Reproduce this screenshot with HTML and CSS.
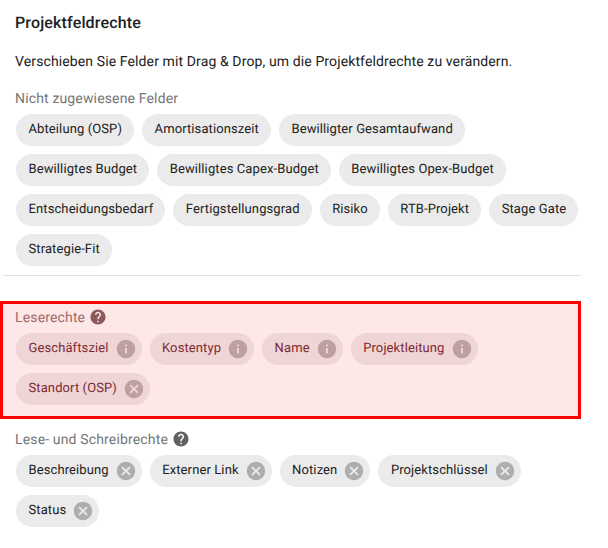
FILE: index.html
```html
<!DOCTYPE html>
<html lang="de">
<head>
    <meta charset="UTF-8">
    <meta name="viewport" content="width=device-width, initial-scale=1.0">
    <title>Projektfeldrechte</title>
    <link rel="stylesheet" href="styles.css">
</head>
<body>
    <svg class="icon-defs" aria-hidden="true">
        <symbol id="icon-cancel" viewBox="0 0 24 24"><path d="M12 2C6.47 2 2 6.47 2 12s4.47 10 10 10 10-4.47 10-10S17.53 2 12 2zm5 13.59L15.59 17 12 13.41 8.41 17 7 15.59 10.59 12 7 8.41 8.41 7 12 10.59 15.59 7 17 8.41 13.41 12 17 15.59z"/></symbol>
        <symbol id="icon-info" viewBox="0 0 24 24"><path d="M12 2C6.48 2 2 6.48 2 12s4.48 10 10 10 10-4.48 10-10S17.52 2 12 2zm1 15h-2v-6h2v6zm0-8h-2V7h2v2z"/></symbol>
        <symbol id="icon-help" viewBox="0 0 24 24"><path d="M12 2C6.48 2 2 6.48 2 12s4.48 10 10 10 10-4.48 10-10S17.52 2 12 2zm1 17h-2v-2h2v2zm2.07-7.75l-.9.92C13.45 12.9 13 13.5 13 15h-2v-.5c0-1.1.45-2.1 1.17-2.83l1.24-1.26c.37-.36.59-.86.59-1.41 0-1.1-.9-2-2-2s-2 .9-2 2H8c0-2.21 1.79-4 4-4s4 1.79 4 4c0 .88-.36 1.68-.93 2.25z"/></symbol>
    </svg>

    <div class="panel">
        <h1 class="title">Projektfeldrechte</h1>
        <p class="intro">Verschieben Sie Felder mit Drag &amp; Drop, um die Projektfeldrechte zu verändern.</p>

        <!-- Unassigned fields -->
        <div class="section section-unassigned">
            <div class="section-label"><span class="section-name">Nicht zugewiesene Felder</span></div>
            <div class="chips">
                <div class="chip"><span class="chip-label">Abteilung (OSP)</span></div>
                <div class="chip"><span class="chip-label">Amortisationszeit</span></div>
                <div class="chip"><span class="chip-label">Bewilligter Gesamtaufwand</span></div>
                <div class="chip"><span class="chip-label">Bewilligtes Budget</span></div>
                <div class="chip"><span class="chip-label">Bewilligtes Capex-Budget</span></div>
                <div class="chip"><span class="chip-label">Bewilligtes Opex-Budget</span></div>
                <div class="chip"><span class="chip-label">Entscheidungsbedarf</span></div>
                <div class="chip"><span class="chip-label">Fertigstellungsgrad</span></div>
                <div class="chip"><span class="chip-label">Risiko</span></div>
                <div class="chip"><span class="chip-label">RTB-Projekt</span></div>
                <div class="chip"><span class="chip-label">Stage Gate</span></div>
                <div class="chip"><span class="chip-label">Strategie-Fit</span></div>
            </div>
        </div>

        <hr class="divider">

        <!-- Read rights, invalid drop target -->
        <div class="section section-read">
            <div class="section-label"><span class="section-name">Leserechte</span> <svg class="help-icon"><use href="#icon-help"/></svg></div>
            <div class="chips">
                <div class="chip"><span class="chip-label">Geschäftsziel</span><svg class="chip-icon"><use href="#icon-info"/></svg></div>
                <div class="chip"><span class="chip-label">Kostentyp</span><svg class="chip-icon"><use href="#icon-info"/></svg></div>
                <div class="chip"><span class="chip-label">Name</span><svg class="chip-icon"><use href="#icon-info"/></svg></div>
                <div class="chip"><span class="chip-label">Projektleitung</span><svg class="chip-icon"><use href="#icon-info"/></svg></div>
                <div class="chip"><span class="chip-label">Standort (OSP)</span><svg class="chip-icon"><use href="#icon-cancel"/></svg></div>
            </div>
        </div>

        <!-- Read and write rights -->
        <div class="section section-write">
            <div class="section-label"><span class="section-name">Lese- und Schreibrechte</span> <svg class="help-icon"><use href="#icon-help"/></svg></div>
            <div class="chips">
                <div class="chip"><span class="chip-label">Beschreibung</span><svg class="chip-icon"><use href="#icon-cancel"/></svg></div>
                <div class="chip"><span class="chip-label">Externer Link</span><svg class="chip-icon"><use href="#icon-cancel"/></svg></div>
                <div class="chip"><span class="chip-label">Notizen</span><svg class="chip-icon"><use href="#icon-cancel"/></svg></div>
                <div class="chip"><span class="chip-label">Projektschlüssel</span><svg class="chip-icon"><use href="#icon-cancel"/></svg></div>
                <div class="chip"><span class="chip-label">Status</span><svg class="chip-icon"><use href="#icon-cancel"/></svg></div>
            </div>
        </div>
    </div>
</body>
</html>
```

FILE: styles.css
```css
body {
    font-family: Roboto, sans-serif;
    letter-spacing: 0.00938em;
    text-rendering: geometricPrecision;
    margin: 0;
    background-color: #ffffff;
    color: #212121;
}
.icon-defs {
    display: none;
}
.panel {
    width: 581px;
}
.title {
    margin: 0;
    padding: 13px 15px 0;
    font-size: 16px;
    font-weight: 500;
    line-height: 19px;
}
.intro {
    margin: 0;
    padding: 20px 15px 0;
    font-size: 14px;
    line-height: 20px;
    letter-spacing: 0.115px;
}
.section {
    padding: 0 0 0 16px;
}
.section-unassigned {
    padding-top: 17px;
}
.section-label {
    display: flex;
    align-items: center;
    gap: 4px;
    margin-left: -1px;
    margin-bottom: 7px;
    height: 18px;
    font-size: 14px;
    line-height: 18px;
    color: #757575;
}
.section-name {
    padding-top: 2px;
}
.help-icon {
    width: 18px;
    height: 18px;
    fill: #616161;
}
.chips {
    display: flex;
    flex-wrap: wrap;
    gap: 8px;
}
.chip {
    display: flex;
    align-items: center;
    height: 32px;
    border-radius: 16px;
    background-color: #ebebeb;
    font-size: 13px;
    letter-spacing: 0.105px;
}
.chip-label {
    padding: 0 12px 1px 12.5px;
}
.chip-icon {
    width: 22px;
    height: 22px;
    margin: 0 5px 0 -6px;
    fill: rgba(0, 0, 0, 0.26);
}
.divider {
    margin: 9px 0 0 3px;
    height: 1px;
    border: none;
    background-color: #e4e4e4;
}
.section-read {
    margin-top: 25px;
    padding: 4px 0 11px 13px;
    height: 118px;
    box-sizing: border-box;
    border: 3px solid #ff0000;
    background-color: #fde7e7;
}
.section-read .section-label {
    color: #a16a6a;
}
.section-read .help-icon {
    fill: #8c5a5a;
}
.section-read .chip {
    background-color: #efd5d5;
    color: #7d2a33;
}
.section-read .chip-icon {
    fill: #bfa0a0;
}
.section-write {
    padding-top: 11px;
}
```
